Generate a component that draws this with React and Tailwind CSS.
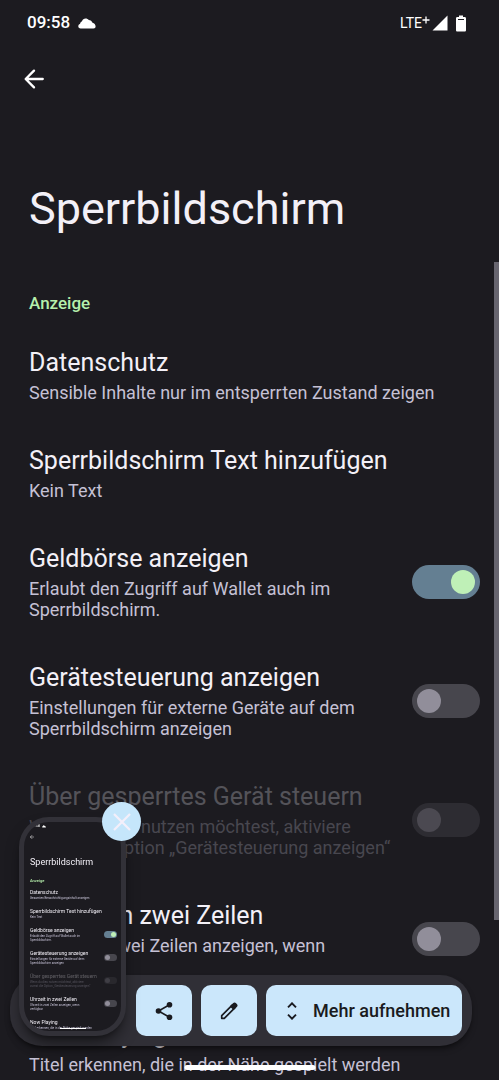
import React, { useState } from 'react';

const items = [
    { id: 'privacy', title: 'Datenschutz', text: 'Sensible Inhalte nur im entsperrten Zustand zeigen', previewText: 'Gesamten Benachrichtigungsinhalt anzeigen' },
    { id: 'text', title: 'Sperrbildschirm Text hinzufügen', text: 'Kein Text' },
    { id: 'wallet', title: 'Geldbörse anzeigen', text: 'Erlaubt den Zugriff auf Wallet auch im\nSperrbildschirm.', toggle: true },
    { id: 'controls', title: 'Gerätesteuerung anzeigen', text: 'Einstellungen für externe Geräte auf dem\nSperrbildschirm anzeigen', toggle: true },
    { id: 'locked', title: 'Über gesperrtes Gerät steuern', text: 'Wenn du dies nutzen möchtest, aktiviere\nzuerst die Option „Gerätesteuerung anzeigen“', toggle: true, disabled: true },
    { id: 'clock', title: 'Uhrzeit in zwei Zeilen', text: 'Uhrzeit in zwei Zeilen anzeigen, wenn\nverfügbar', toggle: true },
    { id: 'playing', title: 'Now Playing', text: 'Titel erkennen, die in der Nähe gespielt werden' },
];

const CloudIcon = ({ className }) => (
    <svg viewBox="0 0 18 11" className={className} fill="currentColor">
        <path d="M2.600 10.400C1.200 10.400.3 9.500.3 8.200c0-1.100.6-1.900 1.700-2.200C2.300 4.500 3 3.600 4 3.200 4.600 1.400 5.900.4 7.600.4c1.300 0 2.400.5 3.100 1.500 1.900.1 3.200 1.100 3.800 2.900 1.800.4 3.100 1.900 3.100 3.600 0 1.200-.8 2-2.100 2z" />
    </svg>
);

const BackIcon = ({ className }) => (
    <svg viewBox="0 0 24 24" className={className} fill="none" stroke="currentColor" strokeWidth="2.8" strokeLinecap="round" strokeLinejoin="round">
        <path d="M22.500 12H2.500M12 2 2 12l10 10" />
    </svg>
);

const StatusBar = () => (
    <div className="flex items-center justify-between h-[46px] pl-[27px] pr-[33px] text-white">
        <div className="flex items-center gap-2">
            <span className="text-[17px] font-medium">09:58</span>
            <CloudIcon className="w-[18px] h-[11px]" />
        </div>
        <div className="flex items-center">
            <span className="text-[14px]">LTE</span>
            <svg viewBox="0 0 8 16" className="w-[8px] h-[16px]" fill="none" stroke="currentColor" strokeWidth="1.300">
                <path d="M4 1.500v7M.5 5h7" />
            </svg>
            <svg viewBox="0 0 16 16" className="w-[16px] h-[16px] ml-[2px]" fill="currentColor">
                <path d="M15.500.500v15H.5z" />
            </svg>
            <svg viewBox="0 0 10 17" className="w-[10px] h-[17px] ml-2" fill="currentColor" fillRule="evenodd">
                <path d="M3 .5h4v1.500h1.700c.7 0 1.300.6 1.300 1.300v11.900c0 .7-.6 1.300-1.300 1.300H1.300C.6 16.500 0 15.900 0 15.200V3.300C0 2.600.6 2 1.300 2H3zM2 3.900v1h6v-1z" />
            </svg>
        </div>
    </div>
);

const SettingRow = ({ item, checked, onChange }) => (
    <li className="flex items-center justify-between">
        <label htmlFor={item.toggle ? item.id : undefined} className="block">
            <span className={`block text-[25px] leading-[38px] whitespace-nowrap ${item.disabled ? 'text-[#545359]' : 'text-[#f3f0f7]'}`}>{item.title}</span>
            <span className={`block text-lg leading-[21px] whitespace-pre ${item.disabled ? 'text-[#48474f]' : 'text-[#c5c1d5]'}`}>{item.text}</span>
        </label>
        {item.toggle && (
            <input
                id={item.id}
                type="checkbox"
                role="switch"
                checked={checked}
                disabled={item.disabled}
                onChange={onChange}
                className="appearance-none shrink-0 mt-1 w-[68px] h-[34px] rounded-full p-[5px] flex items-center bg-[#47464d] checked:bg-[#647f92] checked:justify-end disabled:opacity-40 before:block before:size-6 before:rounded-full before:bg-[#918e9a] checked:before:bg-[#bff0b7]"
            />
        )}
    </li>
);

// Thumbnail of the captured screen
const Preview = () => (
    <div className="w-[107px] h-[219px] rounded-[30px] border-[5px] border-[#323138] bg-[#1c1b20] shadow-lg shadow-black/50 overflow-hidden pl-[6px] pr-[4px] relative">
        <div className="flex items-center gap-[2px] h-[8px] text-white text-[4px] leading-[4px]">
            <span>09:58</span>
            <CloudIcon className="w-[4px] h-[3px]" />
        </div>
        <BackIcon className="w-[4px] h-[4px] mt-[5px] text-white" />
        <p className="mt-[16px] text-[9px] leading-[14px] text-[#f3f0f7]">Sperrbildschirm</p>
        <p className="mt-[8px] text-[4px] leading-[8px] font-medium text-[#b6f0ac]">Anzeige</p>
        <ul className="mt-[3px] flex flex-col gap-[7px]">
            {items.map((item) => (
                <li key={item.id} className={`flex items-center justify-between ${item.disabled ? 'opacity-30' : ''}`}>
                    <div className="whitespace-pre">
                        <p className="text-[5px] leading-[8px] text-[#f3f0f7]">{item.title}</p>
                        <p className="text-[3px] leading-[4px] text-[#c5c1d5]">{item.previewText || item.text}</p>
                    </div>
                    {item.toggle && (
                        <span className={`flex shrink-0 w-[13px] h-[7px] p-[1px] rounded-full ${item.id === 'wallet' ? 'justify-end bg-[#647f92]' : 'bg-[#47464d]'}`}>
                            <span className={`size-[5px] rounded-full ${item.id === 'wallet' ? 'bg-[#bff0b7]' : 'bg-[#918e9a]'}`} />
                        </span>
                    )}
                </li>
            ))}
        </ul>
        <div className="absolute bottom-[2px] left-1/2 -translate-x-1/2 w-[26px] h-[1px] bg-white" />
    </div>
);

const CaptureBar = ({ onClose }) => (
    <div className="fixed left-[10px] right-[27px] bottom-[34px] flex gap-[9px] p-[10px] pl-[126px] rounded-[32px] bg-[#302f36] shadow-md shadow-black/40 text-[#1a1b20]">
        <div className="absolute left-[9px] bottom-[10px]">
            <Preview />
            <button onClick={onClose} aria-label="Schließen" className="absolute -top-[15px] -right-[15px] size-[39px] rounded-full bg-[#c5e6fb] flex items-center justify-center">
                <svg viewBox="0 0 18 18" className="size-[18px]" fill="none" stroke="#f4effa" strokeWidth="2.200">
                    <path d="m1 1 16 16M17 1 1 17" />
                </svg>
            </button>
        </div>
        <button aria-label="Teilen" className="w-14 h-[51px] rounded-[10px] bg-[#cbe7fb] flex items-center justify-center">
            <svg viewBox="0 0 18 20" className="w-[18px] h-[20px]" fill="currentColor">
                <path d="M14.500 3.700 3.500 10l11 6.300" fill="none" stroke="currentColor" strokeWidth="1.600" />
                <circle cx="14.500" cy="3.700" r="2.800" />
                <circle cx="3.500" cy="10" r="2.800" />
                <circle cx="14.500" cy="16.300" r="2.800" />
            </svg>
        </button>
        <button aria-label="Bearbeiten" className="w-14 h-[51px] rounded-[10px] bg-[#cbe7fb] flex items-center justify-center">
            <svg viewBox="0 0 18 18" className="size-[18px]" fill="none" stroke="currentColor" strokeWidth="1.700" strokeLinejoin="round">
                <path d="M1.700 13.700 12.200 3.200l2.600 2.600L4.300 16.300H1.700z" />
                <path d="m11 4.400 2.600-2.600c.6-.6 1.300-.6 1.900 0l.7.7c.6.6.6 1.300 0 1.900L13.600 7z" fill="currentColor" />
            </svg>
        </button>
        <button className="flex-1 h-[51px] pl-[21px] rounded-[10px] bg-[#cbe7fb] flex items-center gap-4 text-lg font-medium whitespace-nowrap">
            <svg viewBox="0 0 10 18" className="w-[10px] h-[18px]" fill="none" stroke="currentColor" strokeWidth="1.900">
                <path d="m1 5.300 4-4 4 4M1 12.700l4 4 4-4" />
            </svg>
            Mehr aufnehmen
        </button>
    </div>
);

const App = () => {
    const [values, setValues] = useState({ wallet: true });
    const [showCapture, setShowCapture] = useState(true);

    const toggle = (id) => setValues((prev) => ({ ...prev, [id]: !prev[id] }));

    return (
        <div className="relative h-screen overflow-hidden bg-[#1c1b20] font-['Roboto','Liberation_Sans',sans-serif]">
            <StatusBar />

            {/* Header */}
            <header className="pl-6 text-[#f3f0f7]">
                <button aria-label="Zurück" className="flex items-center h-[66px] text-white">
                    <BackIcon className="size-5" />
                </button>
                <h1 className="mt-[65px] pl-[5px] text-[45px] leading-[64px]">Sperrbildschirm</h1>
            </header>

            {/* Settings */}
            <main className="pl-[29px] pr-[19px] pt-[50px]">
                <h2 className="text-[17px] leading-6 font-medium text-[#b6f0ac]">Anzeige</h2>
                <ul className="mt-[29px] flex flex-col gap-[39px]">
                    {items.map((item) => (
                        <SettingRow key={item.id} item={item} checked={!!values[item.id]} onChange={() => toggle(item.id)} />
                    ))}
                </ul>
            </main>

            {/* Scroll position */}
            <div className="absolute right-0 top-[262px] bottom-[160px] w-[5px] bg-[#67656f]" />

            {showCapture && <CaptureBar onClose={() => setShowCapture(false)} />}

            {/* Gesture bar */}
            <div className="fixed bottom-[10px] left-1/2 -translate-x-1/2 w-[131px] h-[5px] rounded-full bg-white" />
        </div>
    );
};

export default App;
